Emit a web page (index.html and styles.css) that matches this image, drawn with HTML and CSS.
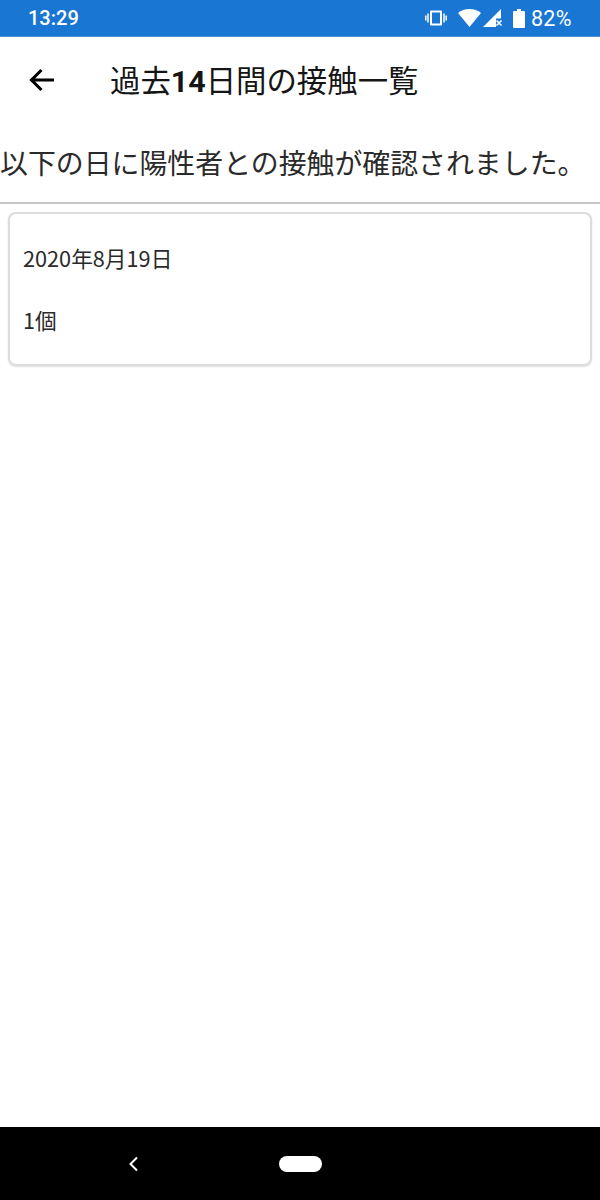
FILE: index.html
```html
<!DOCTYPE html>
<html lang="ja">
<head>
<meta charset="utf-8">
<title>過去14日間の接触一覧</title>
<link rel="stylesheet" href="styles.css">
</head>
<body>
<div class="screen">
  <header class="status">
    <span class="time">13:29</span>
    <div class="status-icons">
      <svg class="ic-vib" width="22" height="16" viewBox="0 0 22 16"><path d="M6 0.500h10a1 1 0 0 1 1 1v13a1 1 0 0 1-1 1H6a1 1 0 0 1-1-1v-13a1 1 0 0 1 1-1zM7 2.500v11h8v-11z" fill="#fff" fill-rule="evenodd"/><path d="M3 3.500v9M.8 5.500v5M19 3.500v9M21.200 5.500v5" stroke="#fff" stroke-width="1.500" fill="none"/></svg>
      <svg class="ic-wifi" width="23" height="18" viewBox="0 0 23 18"><path d="M11.500 18L0 4C3 1.500 7 0 11.500 0S20 1.500 23 4z" fill="#fff"/></svg>
      <svg class="ic-signal" width="20" height="18" viewBox="0 0 20 18"><path d="M0 18L18 0v9.500h-5V18z" fill="#fff"/><path d="M13.500 11.500l5 5M18.500 11.500l-5 5" stroke="#fff" stroke-width="1.700" fill="none"/></svg>
      <svg class="ic-batt" width="12" height="19" viewBox="0 0 12 19"><path d="M4 0h4v2h3a1 1 0 0 1 1 1v15a1 1 0 0 1-1 1H1a1 1 0 0 1-1-1V3a1 1 0 0 1 1-1h3z" fill="#fff"/></svg>
      <span class="pct">82%</span>
    </div>
  </header>
  <div class="appbar">
    <svg class="back" width="26" height="24" viewBox="0 0 26 24"><path d="M25 12H3M12.500 2L2.500 12l10 10" stroke="#000" stroke-width="3" fill="none"/></svg>
    <h1 class="title">過去<b class="num">14</b>日間の接触一覧</h1>
  </div>
  <p class="lead">以下の日に陽性者との接触が確認されました。</p>
  <hr class="rule">
  <main class="content">
    <section class="card">
      <p class="line">2020年8月19日</p>
      <p class="line">1個</p>
    </section>
  </main>
  <footer class="nav">
    <svg class="nav-back" width="12" height="16" viewBox="0 0 12 16"><path d="M10 1.500L3.500 8l6.500 6.500" stroke="#fff" stroke-width="2" fill="none"/></svg>
    <span class="pill"></span>
  </footer>
</div>
</body>
</html>
```
FILE: styles.css
```css
* { box-sizing: border-box; }
html, body { margin: 0; padding: 0; }
body { font-family: "Noto Sans CJK JP", "Noto Sans", sans-serif; color: #1a1a1a; background: #fff; }
.screen { width: 600px; height: 1200px; display: flex; flex-direction: column; overflow: hidden; }
.status { height: 37px; flex: none; background: #1976d2; border-bottom: 1px solid #4a93dc; display: flex; align-items: center; justify-content: space-between; padding: 0 28px; color: #fff; font-family: Roboto, sans-serif; font-size: 20px; font-weight: 500; }
.status-icons { display: flex; align-items: center; }
.ic-vib { margin-right: 11px; }
.ic-wifi { margin-right: 2px; }
.ic-signal { margin-right: 10px; }
.ic-batt { margin-right: 6px; }
.pct { font-size: 21.5px; font-weight: 400; letter-spacing: .4px; }
.appbar { height: 87px; flex: none; display: flex; align-items: center; padding: 0 0 2px 29px; }
.title { margin: 2px 0 0 55px; font-size: 30.4px; font-weight: 400; line-height: 40px; color: #151515; }
.num { font-family: Roboto, sans-serif; font-weight: 700; }
.lead { margin: 0; font-size: 27.9px; font-weight: 400; line-height: 40px; height: 78px; padding-top: 18px; white-space: nowrap; color: #2a2a2a; }
.rule { margin: 0; border: 0; height: 2px; background: #c8c8c8; flex: none; }
.content { flex: 1; padding: 8px 8px 0 8px; }
.card { height: 154px; border: 2px solid #dcdcdc; border-radius: 8px; padding: 28px 13px 0; background: #fff; box-shadow: 0 1px 2px rgba(0,0,0,.12); display: flex; flex-direction: column; gap: 30px; }
.line { margin: 0; font-size: 21.7px; font-weight: 400; line-height: 32px; color: #2a2a2a; }
.nav { height: 73px; flex: none; background: #000; position: relative; display: flex; align-items: center; padding-left: 127px; }
.nav-back { margin-right: 140px; }
.pill { width: 43px; height: 16px; border-radius: 8px; background: #fff; }
```
